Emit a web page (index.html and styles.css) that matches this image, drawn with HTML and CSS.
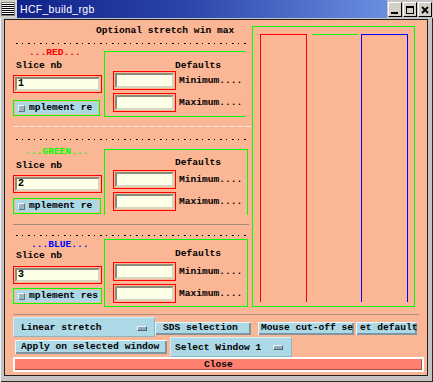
FILE: index.html
```html
<!DOCTYPE html>
<html lang="en">
<head>
    <meta charset="UTF-8">
    <title>HCF_build_rgb</title>
    <link rel="stylesheet" href="styles.css">
</head>
<body>
<div class="window">
    <div class="titlebar">
        <div class="menu-btn"><div class="menu-lines"></div></div>
        <div class="title">HCF_build_rgb</div>
        <div class="wm-buttons">
            <div class="wm-btn">
                <svg width="10" height="10" viewBox="0 0 10 10"><rect x="1" y="7" width="7" height="2" fill="#000"/></svg>
            </div>
            <div class="wm-btn">
                <svg width="10" height="10" viewBox="0 0 10 10"><rect x="1.5" y="1.5" width="7" height="7" fill="none" stroke="#000" stroke-width="1"/><rect x="1" y="1" width="8" height="2" fill="#000"/></svg>
            </div>
            <div class="wm-btn">
                <svg width="10" height="10" viewBox="0 0 10 10"><path d="M2 2 L8 8 M8 2 L2 8" stroke="#000" stroke-width="1.8"/></svg>
            </div>
        </div>
    </div>

    <div class="client">
        <div class="top">
            <div class="controls">
                <div class="heading">Optional stretch win max</div>

                <div class="section sec-red">
                    <div class="dots"></div>
                    <div class="sec-body">
                        <div class="slice-col">
                            <div class="color-label">...RED...</div>
                            <div class="slice-label">Slice nb</div>
                            <div class="field-box"><div class="field">1</div></div>
                            <div class="check-box"><span class="check"></span><span class="check-text">mplement re</span></div>
                        </div>
                        <div class="group">
                            <div class="defaults">Defaults</div>
                            <div class="range-row min"><div class="field-box small"><div class="field"></div></div><span>Minimum....</span></div>
                            <div class="range-row max"><div class="field-box small"><div class="field"></div></div><span>Maximum....</span></div>
                        </div>
                    </div>
                </div>

                <div class="sep-light"></div>

                <div class="section sec-green">
                    <div class="dots"></div>
                    <div class="sec-body">
                        <div class="slice-col">
                            <div class="color-label">...GREEN...</div>
                            <div class="slice-label">Slice nb</div>
                            <div class="field-box"><div class="field">2</div></div>
                            <div class="check-box"><span class="check"></span><span class="check-text">mplement re</span></div>
                        </div>
                        <div class="group">
                            <div class="defaults">Defaults</div>
                            <div class="range-row min"><div class="field-box small"><div class="field"></div></div><span>Minimum....</span></div>
                            <div class="range-row max"><div class="field-box small"><div class="field"></div></div><span>Maximum....</span></div>
                        </div>
                    </div>
                </div>

                <div class="sep-gray"></div>

                <div class="section sec-blue">
                    <div class="dots"></div>
                    <div class="sec-body">
                        <div class="slice-col">
                            <div class="color-label">...BLUE...</div>
                            <div class="slice-label">Slice nb</div>
                            <div class="field-box"><div class="field">3</div></div>
                            <div class="check-box"><span class="check"></span><span class="check-text">mplement res</span></div>
                        </div>
                        <div class="group">
                            <div class="defaults">Defaults</div>
                            <div class="range-row min"><div class="field-box small"><div class="field"></div></div><span>Minimum....</span></div>
                            <div class="range-row max"><div class="field-box small"><div class="field"></div></div><span>Maximum....</span></div>
                        </div>
                    </div>
                </div>
            </div>

            <div class="preview">
                <div class="band band-red"></div>
                <div class="band band-green"></div>
                <div class="band band-blue"></div>
            </div>
        </div>

        <div class="rule"></div>

        <div class="row1">
            <div class="drop drop-stretch">
                <div class="drop-btn"><span>Linear stretch</span><span class="drop-mark"></span></div>
            </div>
            <div class="btn btn-sds">SDS selection</div>
            <div class="btn btn-mouse">Mouse cut-off se</div>
            <div class="btn btn-default">et default</div>
        </div>

        <div class="row2">
            <div class="btn btn-apply">Apply on selected window</div>
            <div class="drop drop-window">
                <div class="drop-btn"><span>Select Window 1</span><span class="drop-mark"></span></div>
            </div>
        </div>

        <div class="close-frame"><div class="close">Close</div></div>
    </div>
</div>
</body>
</html>
```

FILE: styles.css
```css
* {
    box-sizing: border-box;
}
body {
    margin: 0;
    background: #fff;
    font-family: "Liberation Mono", "DejaVu Sans Mono", monospace;
    font-size: 9.6px;
    font-weight: bold;
    line-height: 10px;
    color: #000;
}

/* window frame */
.window {
    width: 433px;
    height: 382px;
    background: #c4c4c4;
    overflow: hidden;
    box-shadow: inset 1px 1px #f4f4f4, inset -1px -1px #2a2a2a;
}
.titlebar {
    display: flex;
    height: 18px;
}
.menu-btn {
    width: 17px;
    height: 18px;
    padding: 2px 2px 2px 1px;
    background: #d4d0c8;
}
.menu-lines {
    width: 14px;
    height: 14px;
    border: 1px solid #808080;
    background: repeating-linear-gradient(to bottom, #fff 0 1px, #000 1px 2px);
}
.title {
    flex: 1;
    padding-left: 3px;
    background: linear-gradient(to right, #10228a, #2a44aa 45%, #6a8fe0);
    color: #fff;
    font-family: "Liberation Sans", Arial, sans-serif;
    font-weight: normal;
    font-size: 10.5px;
    line-height: 18px;
    letter-spacing: 0.3px;
}
.wm-buttons {
    display: flex;
    gap: 1px;
    width: 46px;
    padding: 2px 0 0 1px;
    background: #c4c4c4;
}
.wm-btn {
    width: 14px;
    height: 15px;
    display: flex;
    align-items: center;
    justify-content: center;
    background: #d4d0c8;
    border: 1px solid;
    border-color: #fff #000 #000 #fff;
}

.client {
    margin: 1px 5px 0 4px;
    height: 357px;
    border: 1px solid #202020;
    background: #fbb695;
}

/* top area */
.top {
    display: flex;
    padding: 6px 0 0 8px;
}
.controls {
    width: 239px;
}
.heading {
    height: 10px;
    padding-left: 83px;
}
.dots {
    width: 232px;
    height: 2px;
    margin: var(--dots) 0 0 3px;
    background: repeating-linear-gradient(to right, #000 0 2px, transparent 2px 6px, #000 6px 7px, transparent 7px 12px);
    background-size: 12px 1px;
    background-repeat: repeat-x;
    background-position: 0 1px;
}
.sec-red {
    --dots: 6px; --grp: 7px; --lab: 4px; --sl: 3px; --fld: 4px; --chk: 7px;
    --def: 9px; --min: 0px; --max: 3px; --pb: 4px; --lab-x: 16px;
    --lab-color: #ff0000; --chk-w: 87px;
}
.sec-green {
    --dots: 11px; --grp: 9px; --lab: 7px; --sl: 4px; --fld: 4px; --chk: 5px;
    --def: 8px; --min: 2px; --max: 3px; --pb: 4px; --lab-x: 12px;
    --lab-color: #00ff00; --chk-w: 88px;
}
.sec-blue {
    --dots: 9px; --grp: 3px; --lab: 4px; --sl: 1px; --fld: 5px; --chk: 4px;
    --def: 9px; --min: 3px; --max: 3px; --pb: 3px; --lab-x: 18px;
    --lab-color: #0000ff; --chk-w: 89px;
}
.sec-body {
    display: flex;
    align-items: flex-start;
}
.slice-col {
    width: 89px;
    margin-right: 2px;
}
.color-label {
    height: 10px;
    margin-top: var(--lab);
    padding-left: var(--lab-x);
    color: var(--lab-color);
}
.slice-label {
    height: 10px;
    margin-top: var(--sl);
    padding-left: 3px;
}
.field-box {
    height: 18px;
    margin-top: var(--fld);
    padding: 1px;
    border: 1px solid #ff0000;
}
.field {
    height: 100%;
    padding-left: 1px;
    background: #fdffe6;
    border: 2px solid;
    border-color: #8c8c7c #d6d6c2 #d6d6c2 #8c8c7c;
    line-height: 10px;
    font-size: 10px;
}
.check-box {
    display: flex;
    align-items: center;
    width: var(--chk-w);
    height: 16px;
    margin-top: var(--chk);
    padding: 1px;
    border: 1px solid #00ff00;
    background: #add8e6;
    background-clip: content-box;
    overflow: hidden;
}
.check-box .check {
    width: 7px;
    height: 7px;
    margin-left: 3px;
    flex: none;
    background: #9fb4bf;
    border: 1px solid;
    border-color: #eef8fb #5d7682 #5d7682 #eef8fb;
}
.check-box .check-text {
    margin-left: 4px;
    white-space: nowrap;
}

.group {
    width: 144px;
    margin-top: var(--grp);
    padding: 0 0 var(--pb) 8px;
    border: 1px solid #00ff00;
}
.sec-red .group {
    width: 141px;
    border-right: none;
}
.sec-green .group {
    border-bottom: none;
}
.defaults {
    height: 10px;
    margin-top: var(--def);
    padding-left: 62px;
}
.range-row {
    display: flex;
    align-items: center;
    white-space: nowrap;
}
.range-row.min {
    margin-top: var(--min);
}
.range-row.max {
    margin-top: var(--max);
}
.field-box.small {
    width: 63px;
    height: 19px;
    margin: 0 3px 0 0;
}

.sep-light {
    height: 1px;
    margin-top: 9px;
    background: repeating-linear-gradient(to right, #ffe4d8 0 6px, #fcc8b0 6px 8px);
}
.sep-gray {
    width: 236px;
    height: 1px;
    margin-top: 9px;
    background: #a88878;
}

/* colour preview */
.preview {
    display: flex;
    width: 163px;
    height: 281px;
    padding: 7px 0 4px 7px;
    border: 1px solid #00ff00;
}
.band {
    height: 268px;
}
.band-red {
    width: 47px;
    border: 1px solid #ff0000;
    border-bottom: none;
}
.band-green {
    width: 46px;
    margin-left: 5px;
    border-top: 1px solid #00ff00;
}
.band-blue {
    width: 47px;
    margin-left: 3px;
    border: 1px solid #0000ff;
    border-bottom: none;
}

/* bottom controls */
.rule {
    width: 406px;
    height: 1px;
    margin: 7px 0 0 8px;
    background: #b08e80;
}
.row1 {
    display: flex;
    align-items: flex-start;
    height: 20px;
    margin: 2px 0 0 8px;
}
.row2 {
    display: flex;
    align-items: flex-start;
    height: 20px;
    margin-left: 10px;
}
.drop {
    height: 20px;
    background: #add8e6;
    border: 1px solid;
    border-color: #d4eef6 #8fb4c2 #8fb4c2 #d4eef6;
}
.drop-btn {
    display: flex;
    align-items: center;
    height: 100%;
    white-space: nowrap;
}
.drop-mark {
    width: 10px;
    height: 5px;
    margin-left: auto;
    background: #8fa8b4;
    border: 1px solid;
    border-color: #eef8fb #4e6470 #4e6470 #eef8fb;
}
.drop-stretch {
    width: 142px;
    padding: 2px 7px 0 7px;
}
.drop-window {
    width: 122px;
    margin-left: 3px;
    padding: 1px 8px 0 4px;
}
.btn {
    height: 13px;
    padding: 0 2px;
    background: #add8e6;
    box-shadow: inset 1px 1px #eaf6fa, inset -2px -2px #7d97a2;
    line-height: 12px;
    white-space: nowrap;
    overflow: hidden;
}
.btn-sds {
    width: 96px;
    margin-top: 5px;
    padding-left: 8px;
}
.btn-mouse {
    width: 96px;
    margin: 5px 0 0 7px;
    padding-left: 3px;
}
.btn-default {
    width: 61px;
    margin: 5px 0 0 2px;
    padding-left: 4px;
}
.btn-apply {
    width: 152px;
    height: 14px;
    margin-top: 3px;
    padding-left: 6px;
    line-height: 13px;
}
.close-frame {
    width: 411px;
    height: 15px;
    margin-left: 8px;
    border: 2px solid #fff;
}
.close {
    height: 100%;
    background: #ff8070;
    box-shadow: inset -1px -1px #a4503e;
    text-align: center;
    line-height: 11px;
}
```
